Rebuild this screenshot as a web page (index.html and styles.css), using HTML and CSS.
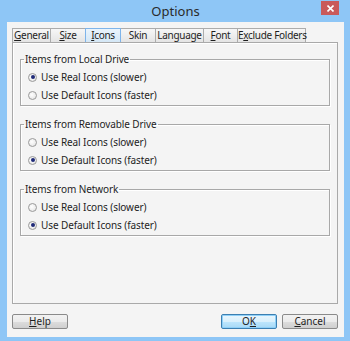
FILE: index.html
```html
<!DOCTYPE html>
<html lang="en">
<head>
    <meta charset="UTF-8">
    <title>Options</title>
    <link rel="stylesheet" href="styles.css">
</head>
<body>
    <div class="window">
        <div class="titlebar">
            <span></span>
            <span class="title">Options</span>
            <button class="close" aria-label="Close">
                <svg width="7" height="7" viewBox="0 0 7 7"><path d="M0.5 0.5L6.5 6.5M6.5 0.5L0.5 6.5" stroke="#fff" stroke-width="1.6"/></svg>
            </button>
        </div>

        <div class="client">
            <div class="tabs">
                <div class="tab"><u>G</u>eneral</div>
                <div class="tab"><u>S</u>ize</div>
                <div class="tab active"><u>I</u>cons</div>
                <div class="tab">Skin</div>
                <div class="tab">Language</div>
                <div class="tab"><u>F</u>ont</div>
                <div class="tab">E<u>x</u>clude Folders</div>
            </div>

            <div class="panel">
                <fieldset class="group">
                    <legend>Items from Local Drive</legend>
                    <label class="radio checked"><span class="dot"></span>Use Real Icons (slower)</label>
                    <label class="radio"><span class="dot"></span>Use Default Icons (faster)</label>
                </fieldset>
                <fieldset class="group">
                    <legend>Items from Removable Drive</legend>
                    <label class="radio"><span class="dot"></span>Use Real Icons (slower)</label>
                    <label class="radio checked"><span class="dot"></span>Use Default Icons (faster)</label>
                </fieldset>
                <fieldset class="group">
                    <legend>Items from Network</legend>
                    <label class="radio"><span class="dot"></span>Use Real Icons (slower)</label>
                    <label class="radio checked"><span class="dot"></span>Use Default Icons (faster)</label>
                </fieldset>
            </div>

            <div class="buttons">
                <button class="btn"><u>H</u>elp</button>
                <span class="spacer"></span>
                <button class="btn default">O<u>K</u></button>
                <button class="btn"><u>C</u>ancel</button>
            </div>
        </div>
    </div>
</body>
</html>
```

FILE: styles.css
```css
* {
    margin: 0;
    padding: 0;
    box-sizing: border-box;
}

body {
    font-family: "Noto Sans", "Open Sans", sans-serif;
    font-size: 10px;
    letter-spacing: -0.1px;
    color: #1e1e1e;
    background: #8ec6f6;
}

.window {
    width: 350px;
    height: 341px;
    display: flex;
    flex-direction: column;
    padding: 0 6px 6px 7px;
    background: #8ec6f6;
}

.titlebar {
    height: 22px;
    display: grid;
    grid-template-columns: 1fr auto 1fr;
    align-items: start;
}

.title {
    font-size: 13px;
    line-height: 23px;
    letter-spacing: 0;
    color: #2a2a2a;
}

.close {
    justify-self: end;
    margin: 1px 5px 0 0;
    width: 18px;
    height: 14px;
    border: none;
    background: #c95a5a;
    display: flex;
    align-items: center;
    justify-content: center;
}

.client {
    flex: 1;
    background: #f4f4f4;
    padding: 6px 6px 8px 5px;
    display: flex;
    flex-direction: column;
}

.tabs {
    display: flex;
    height: 14px;
}

.tab {
    height: 14px;
    line-height: 13px;
    text-align: center;
    border: 1px solid #acacac;
    border-bottom: none;
    margin-right: -1px;
    background: linear-gradient(#f7f7f7, #e4e4e4);
    white-space: nowrap;
    letter-spacing: -0.3px;
}

.tab:nth-child(1) { width: 39px; }
.tab:nth-child(2) { width: 36px; }
.tab:nth-child(3) { width: 36px; }
.tab:nth-child(4) { width: 36px; }
.tab:nth-child(5) { width: 49px; }
.tab:nth-child(6) { width: 35px; }
.tab:nth-child(7) { width: 69px; }

.tab.active {
    background: linear-gradient(#eaf4fc, #d4e7f6);
    border-color: #7eb4ea;
    position: relative;
    z-index: 1;
}

.tab u,
.btn u {
    text-decoration-thickness: 1px;
    text-underline-offset: 1px;
}

.panel {
    width: 326px;
    height: 262px;
    border: 1px solid #a9a9a9;
    box-shadow: inset 1px 1px #fff;
    padding: 10px 7px 0 7px;
    display: flex;
    flex-direction: column;
    gap: 12px;
}

.group {
    border: 1px solid #a8a8a8;
    box-shadow: inset 1px 1px #fff, 1px 1px #fff;
    height: 53px;
    padding: 4px 0 0 7px;
    display: flex;
    flex-direction: column;
    gap: 2px;
}

.group legend {
    padding: 0 1px;
    margin-left: -4px;
    line-height: 12px;
}

.radio {
    display: flex;
    align-items: center;
    gap: 4px;
    height: 16px;
}

.dot {
    width: 9px;
    height: 9px;
    border-radius: 50%;
    border: 1px solid #9a9a9a;
    background: radial-gradient(circle at 40% 40%, #ffffff, #e0e0e0);
    display: flex;
    align-items: center;
    justify-content: center;
}

.radio.checked .dot::after {
    content: "";
    width: 4px;
    height: 4px;
    border-radius: 50%;
    background: #1f2a78;
}

.buttons {
    margin-top: 10px;
    display: flex;
    gap: 5px;
}

.spacer {
    flex: 1;
}

.btn {
    width: 56px;
    height: 15px;
    font-family: inherit;
    font-size: 10px;
    line-height: 13px;
    color: #1e1e1e;
    border: 1px solid #8a8a8a;
    border-radius: 2px;
    background: linear-gradient(#f2f2f2 0%, #ebebeb 50%, #dddddd 51%, #cfcfcf 100%);
}

.btn.default {
    border-color: #3c7fb1;
    background: linear-gradient(#eaf6fd 0%, #d9f0fc 50%, #bee6fd 51%, #a7d9f5 100%);
    box-shadow: inset 0 0 0 1px #8fd0f8;
}
```
